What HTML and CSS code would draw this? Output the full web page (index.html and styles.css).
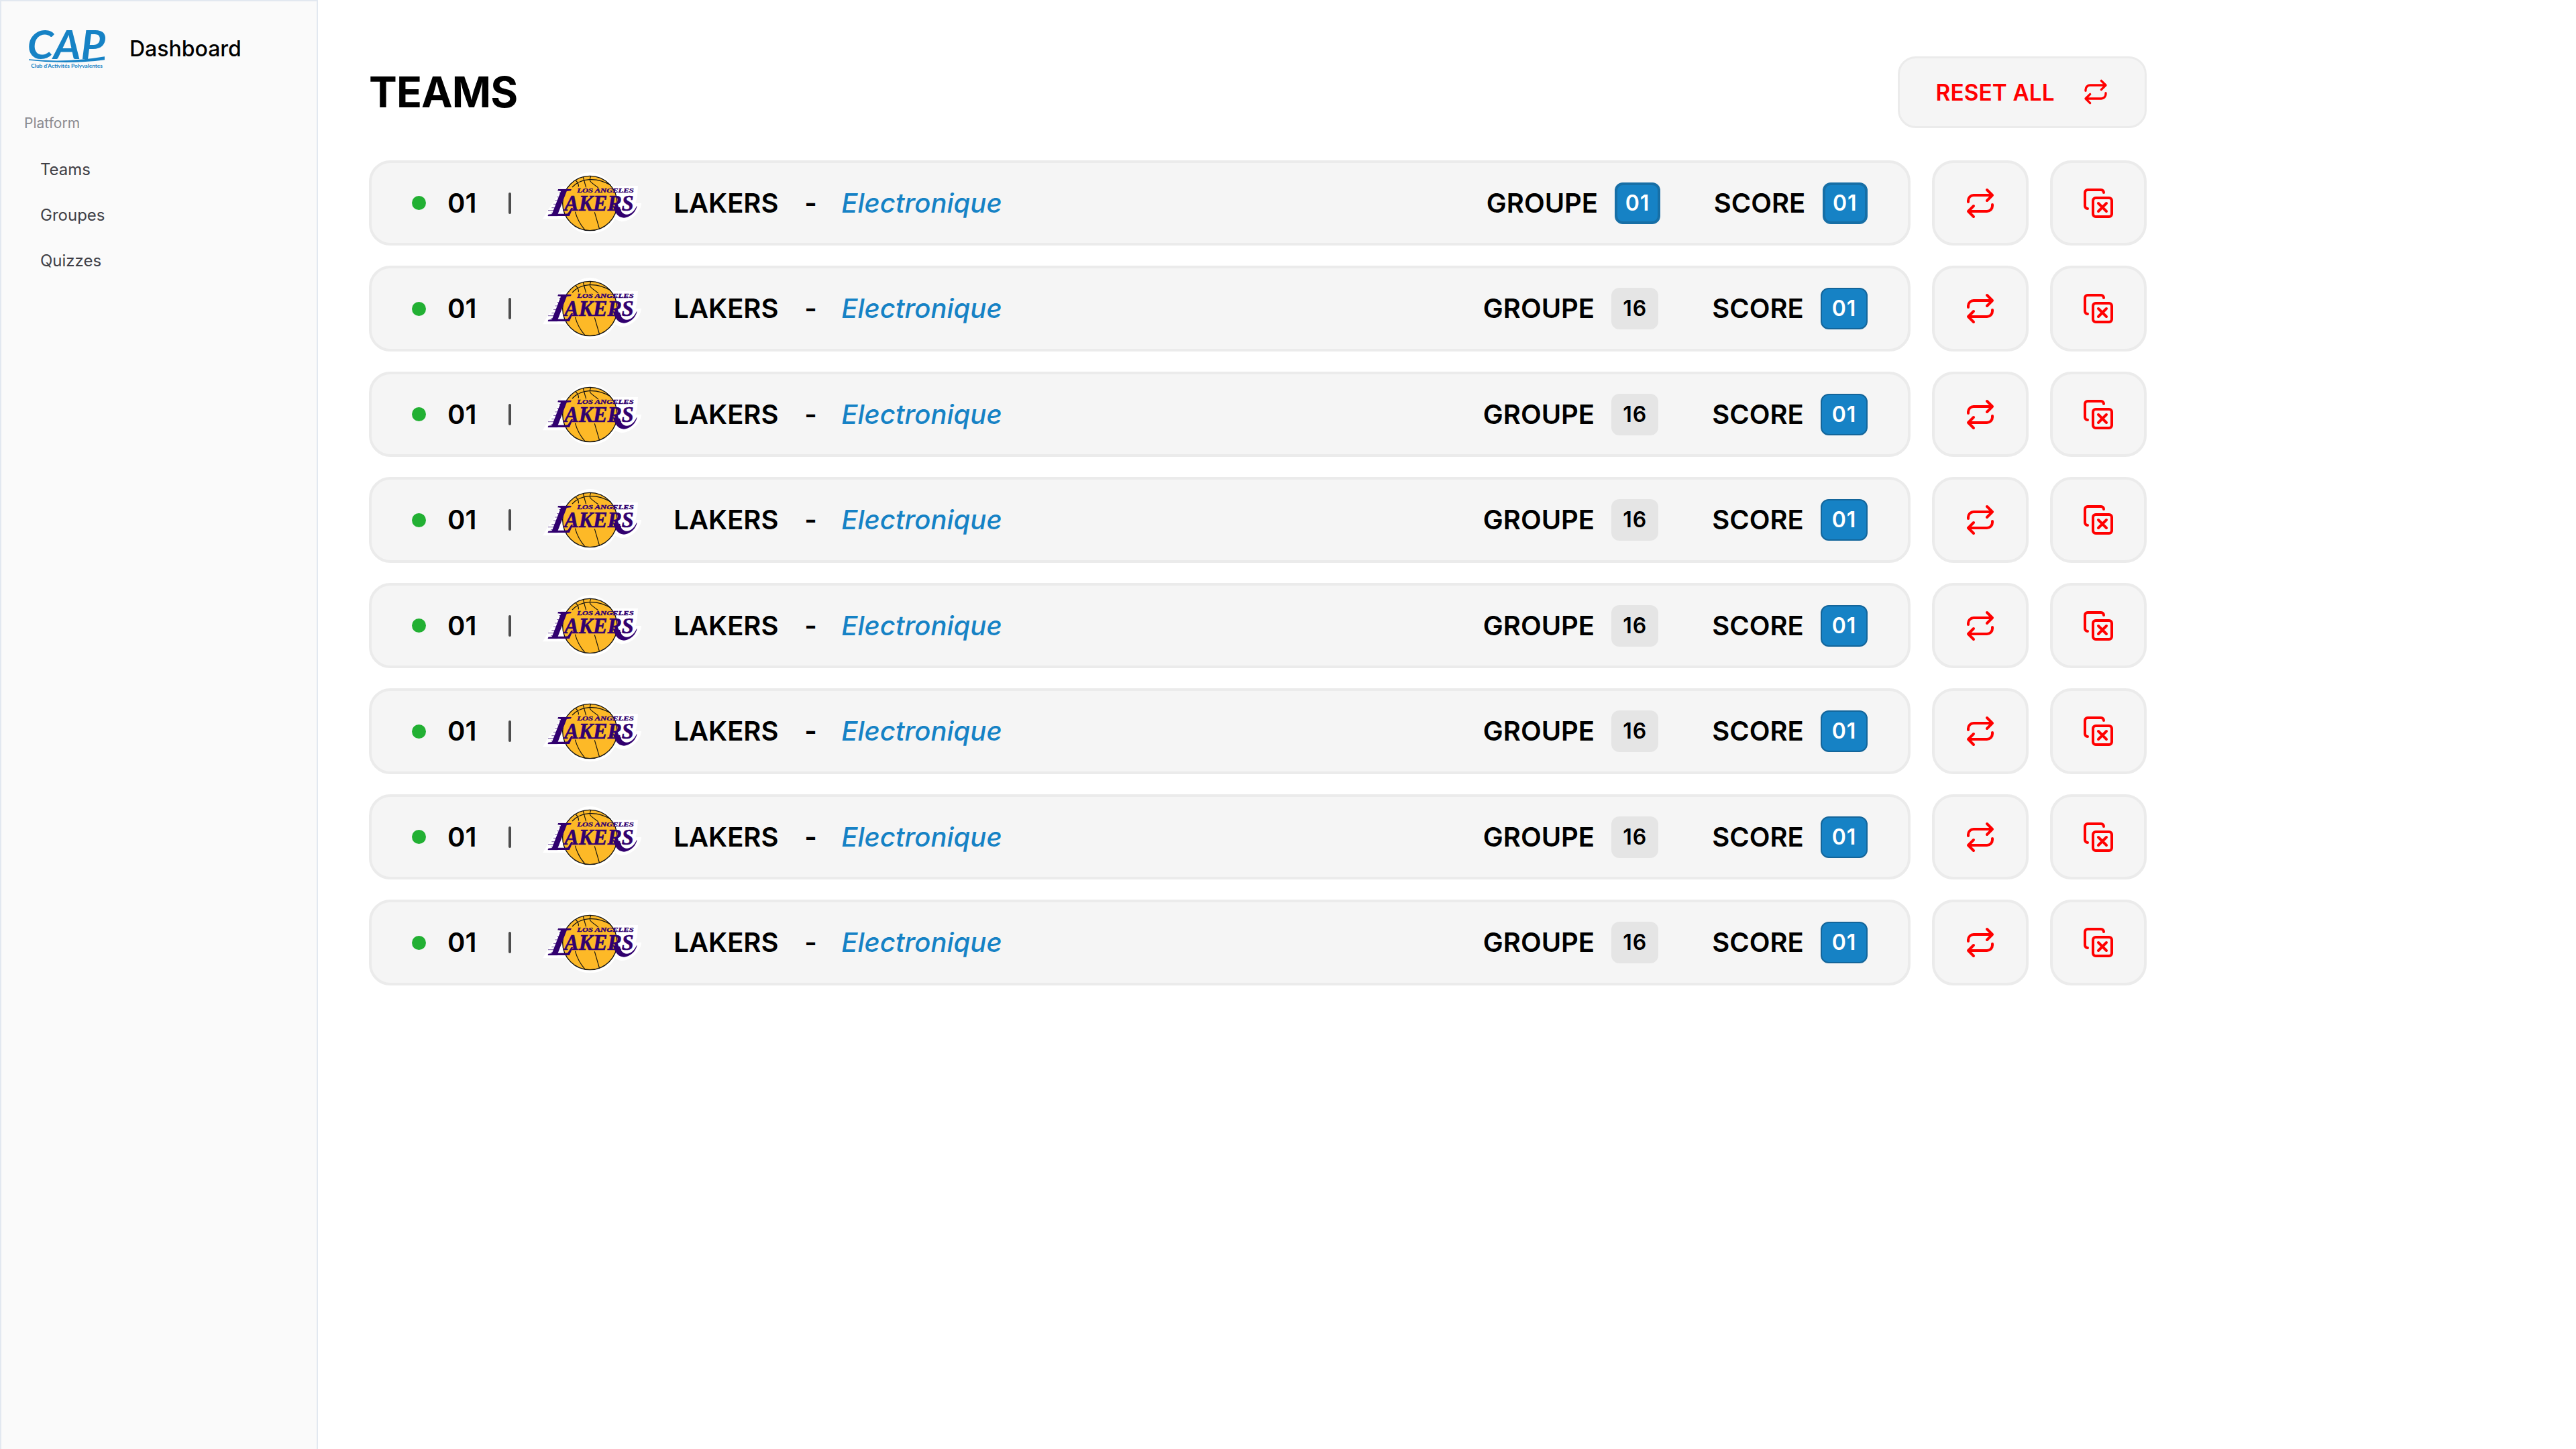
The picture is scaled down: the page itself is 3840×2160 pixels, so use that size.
FILE: index.html
```html
<!DOCTYPE html>
<html lang="fr">
<head>
<meta charset="utf-8">
<title>Dashboard – Teams</title>
<link rel="stylesheet" href="styles.css">
</head>
<body>
<svg class="sprite" aria-hidden="true">
  <symbol id="icon-repeat" viewBox="0 0 24 24">
    <path d="m17 2 4 4-4 4M3 11v-1a4 4 0 0 1 4-4h14M7 22l-4-4 4-4M21 13v1a4 4 0 0 1-4 4H3"/>
  </symbol>
  <symbol id="icon-copy-x" viewBox="0 0 24 24">
    <path d="M12 12l6 6M18 12l-6 6"/>
    <rect x="8" y="8" width="14" height="14" rx="2"/>
    <path d="M4 16c-1.1 0-2-.9-2-2V4c0-1.1.9-2 2-2h10c1.1 0 2 .9 2 2"/>
  </symbol>
</svg>

<div class="app">
  <aside class="sidebar">
    <div class="brand">
      <svg class="brand-logo" viewBox="0 0 346 180" role="img" aria-label="CAP">
        <text class="brand-name" x="-7" y="131" textLength="349" lengthAdjust="spacingAndGlyphs">CAP</text>
        <path fill="#1682c5" d="M0 133Q170 150 339 121V136Q170 158 0 137Z"/>
        <text class="brand-tag" x="10" y="171" textLength="320" lengthAdjust="spacingAndGlyphs">Club d'Activités Polyvalentes</text>
      </svg>
      <span class="brand-title">Dashboard</span>
    </div>
    <div class="nav-label">Platform</div>
    <nav class="nav">
      <a class="nav-link">Teams</a>
      <a class="nav-link">Groupes</a>
      <a class="nav-link">Quizzes</a>
    </nav>
  </aside>

  <main class="main">
    <header class="header">
      <h1 class="title">TEAMS</h1>
      <button class="reset"><span class="reset-label">RESET ALL</span><svg class="icon icon-small"><use href="#icon-repeat"/></svg></button>
    </header>
    <div class="rows" id="rows"></div>
  </main>
</div>

<template id="row">
  <div class="row">
    <div class="card">
      <span class="dot"></span>
      <span class="rank">01</span>
      <span class="bar"></span>
      <svg class="team-logo" viewBox="0 0 450 275" role="img" aria-label="Los Angeles Lakers">
        <path fill="#fff" d="M0 208 30 158 50 132 62 110 85 62H112C140 20 175 0 211 0S285 22 314 60H426L422 112 415 138H441C438 180 395 218 352 220Q330 214 324 208C300 254 258 274 211 274S126 250 104 208Z"/>
        <circle cx="211" cy="138" r="122" fill="#fdb927" stroke="#111" stroke-width="4"/>
        <path fill="none" stroke="#111" stroke-width="3.5" d="M132 66C170 26 240 18 305 58M148 36C158 46 162 52 160 64M181 20C186 40 190 55 194 67M215 17C206 38 208 40 248 68M145 176C154 208 170 236 188 256M232 178Q244 220 254 254"/>
        <path fill="none" stroke="#31006f" stroke-width="2" d="M80 76H120M72 92H100M63 110H94M55 126H86M48 142H80M40 158H72M24 170H66M36 182H60M24 194H66"/>
        <path fill="#31006f" d="M314 150C324 190 346 207 372 202C398 195 416 176 422 150L419 152C410 172 394 188 376 188C358 188 348 174 346 156Z"/>
        <text class="logo-text logo-initial" transform="translate(24 194) skewX(-12)">L</text>
        <text class="logo-text logo-name" x="97" y="172" textLength="310" lengthAdjust="spacingAndGlyphs">AKERS</text>
        <text class="logo-text logo-city" x="154" y="91" textLength="253" lengthAdjust="spacingAndGlyphs">LOS ANGELES</text>
      </svg>
      <span class="name">LAKERS</span>
      <span class="dash">-</span>
      <em class="field">Electronique</em>
      <span class="stat group">GROUPE <b class="badge"></b></span>
      <span class="stat">SCORE <b class="badge badge-blue">01</b></span>
    </div>
    <button class="action"><svg class="icon"><use href="#icon-repeat"/></svg></button>
    <button class="action"><svg class="icon"><use href="#icon-copy-x"/></svg></button>
  </div>
</template>
<script src="rows.js"></script>
</body>
</html>
```
FILE: styles.css
```css
* { box-sizing: border-box; }
body { margin: 0; background: #fff; color: #000; font-family: Inter, "Liberation Sans", sans-serif; }
button { font: inherit; margin: 0; padding: 0; }
.sprite { position: absolute; width: 0; height: 0; }
.app { display: flex; height: 2160px; overflow: hidden; }

.sidebar { width: 474px; flex: none; background: #fafafa; border: 2px solid #e2e8f0; border-bottom: 0; padding: 41.7px 0 0 34px; }
.brand { display: flex; align-items: flex-start; height: 62px; margin-left: 7px; }
.brand-logo { width: 115.3px; height: 60px; flex: none; overflow: visible; }
.brand-name { font-family: Lato, sans-serif; font-style: italic; font-weight: 700; font-size: 180px; fill: #1682c5; }
.brand-tag { font-family: Lato, sans-serif; font-weight: 700; font-size: 23px; fill: #1682c5; }
.brand-title { margin: 9px 0 0 34.7px; font-size: 32px; font-weight: 500; line-height: 40px; }
.nav-label { margin-top: 64.3px; font-size: 21px; line-height: 28px; color: #8b8b90; }
.nav { margin: 21px 0 0 24px; }
.nav-link { display: block; font-size: 24px; line-height: 68px; color: #3f3f46; }

.main { width: 2650px; margin-left: 76px; padding-top: 84px; }
.header { display: flex; justify-content: space-between; align-items: center; height: 106.7px; margin-bottom: 48.3px; }
.title { margin: 0; font-size: 62.6px; font-weight: 700; line-height: 80px; letter-spacing: -0.9px; }
.reset { display: flex; align-items: center; justify-content: space-between; width: 370.7px; height: 106.7px; padding: 0 53.3px; border: 3.33px solid #ebebeb; border-radius: 26.7px; background: #f5f5f5; color: #f00; font-size: 33.33px; font-weight: 600; }
.reset-label { padding-top: 1px; letter-spacing: .1px; }

.rows { display: flex; flex-direction: column; gap: 30px; }
.row { display: flex; gap: 32px; height: 127.5px; }
.card { display: flex; align-items: center; width: 2298px; padding: 0 60px; border: 4px solid #ebebeb; border-radius: 32px; background: #f5f5f5; font-size: 40px; font-weight: 600; line-height: 48px; white-space: nowrap; }
.dot { width: 21px; height: 21px; border-radius: 50%; background: #22b033; }
.rank { width: 91.3px; margin-left: 32px; }
.bar { width: 4px; height: 32px; border-radius: 2px; background: #4d4d4d; }
.team-logo { width: 150px; height: 91.7px; margin-left: 47px; }
.name { margin-left: 45px; }
.dash { margin-left: 38.8px; }
.field { margin-left: 36.4px; font-weight: 500; color: #1682c5; }
.stat { display: flex; align-items: center; gap: 25.2px; }
.group { margin: 0 80px 0 auto; }
.badge { display: flex; align-items: center; justify-content: center; width: 70px; height: 62.4px; border-radius: 12px; background: #e5e5e5; font-size: 32px; font-weight: 600; letter-spacing: 1px; }
.badge-blue { background: #1682c5; border: 2px solid #13659a; color: #fff; }
.row:first-child .badge { width: 67.5px; border-width: 4px; border-color: #176fa6; }
.action { display: flex; align-items: center; justify-content: center; width: 144px; flex: none; border: 4px solid #ebebeb; border-radius: 32px; background: #f5f5f5; color: #f00; }
.icon { width: 48px; height: 48px; fill: none; stroke: currentColor; stroke-width: 2; stroke-linecap: round; stroke-linejoin: round; }
.icon-small { width: 40px; height: 40px; }

.logo-text { font-family: "Liberation Serif", serif; font-style: italic; font-weight: 700; fill: #31006f; }
.logo-initial { font-size: 183px; }
.logo-name { font-size: 101px; stroke: #31006f; stroke-width: 2px; }
.logo-city { font-size: 23px; stroke: #31006f; stroke-width: 1px; }
```
FILE: rows.js
```js
const groups = ["01", "16", "16", "16", "16", "16", "16", "16"];
const list = document.getElementById("rows");
const template = document.getElementById("row");
for (const group of groups) {
  const row = template.content.cloneNode(true);
  const badge = row.querySelector(".group .badge");
  badge.textContent = group;
  if (group === "01") badge.classList.add("badge-blue");
  list.append(row);
}
```
